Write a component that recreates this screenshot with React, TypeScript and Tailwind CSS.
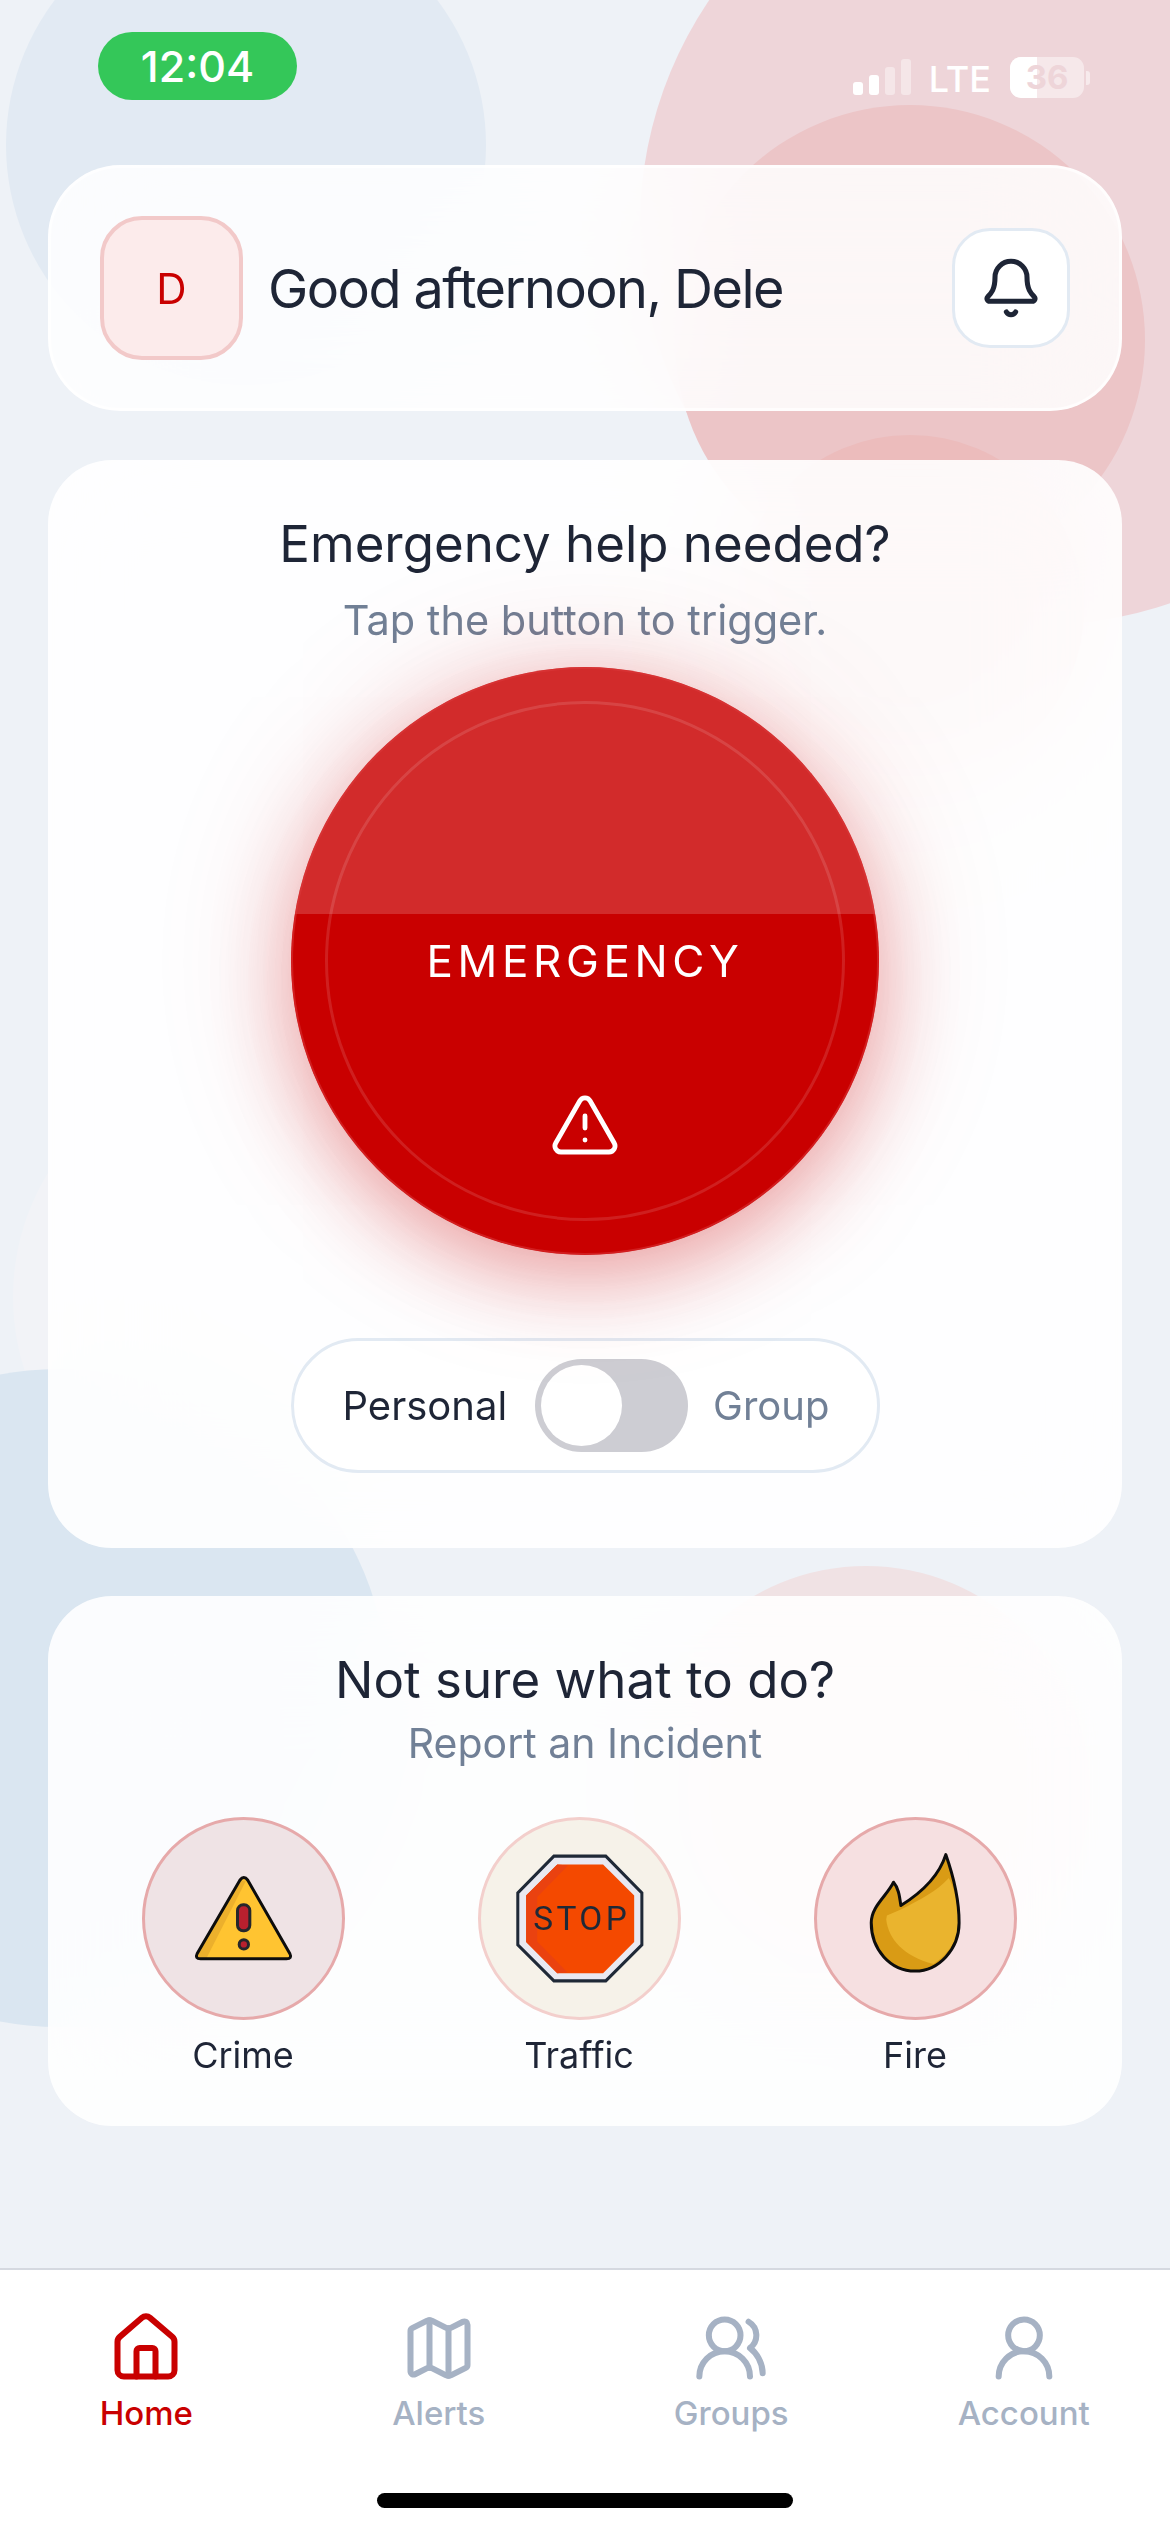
import { Bell, House, Map, TriangleAlert, UserRound, UsersRound } from "lucide-react";

const navItems = [
  { label: "Home", icon: House, active: true },
  { label: "Alerts", icon: Map, active: false },
  { label: "Groups", icon: UsersRound, active: false },
  { label: "Account", icon: UserRound, active: false },
];

function CrimeIcon() {
  return (
    <svg viewBox="35 22 608 610" className="w-[203px] h-[203px] flex-none">
      <path d="M328 212 Q340 196 352 212 L478 432 Q486 448 468 448 L210 448 Q192 448 200 432 Z" fill="#ffc431" />
      <path d="M328 212 L346 214 L228 446 L210 448 Q192 448 200 432 Z" fill="#ecb02c" />
      <path d="M328 212 Q340 196 352 212 L478 432 Q486 448 468 448 L210 448 Q192 448 200 432 Z" fill="none" stroke="#0d0d0d" strokeWidth="9" />
      <rect x="321" y="286" width="37" height="78" rx="17" fill="#b9202e" stroke="#26262b" strokeWidth="9" />
      <circle cx="340" cy="405" r="14" fill="#b9202e" stroke="#26262b" strokeWidth="9" />
    </svg>
  );
}

function StopIcon() {
  return (
    <svg viewBox="53 23 607 607" className="w-[203px] h-[203px] flex-none">
      <polygon points="280,140 435,140 543,250 543,405 435,513 280,513 172,405 172,250" fill="#e9e9f1" stroke="#1f2937" strokeWidth="9" />
      <polygon points="290,165 427,165 520,258 520,397 427,490 290,490 197,397 197,258" fill="#f44900" />
      <polygon points="290,165 322,168 230,262 230,395 320,487 290,490 197,397 197,258" fill="#ea4210" />
      <text x="358" y="362" textAnchor="middle" textLength="280" fontSize="100" fontFamily="Roboto, sans-serif" fill="#1f2937">
        STOP
      </text>
    </svg>
  );
}

function FireIcon() {
  return (
    <svg viewBox="72 22 608 610" className="w-[203px] h-[203px] flex-none">
      <path d="M467 135 C490 200 507 270 507 340 C507 420 445 485 375 485 C300 485 243 420 243 340 C243 290 290 260 310 218 C325 235 328 260 332 288 C385 255 445 205 467 135 Z" fill="#d99b15" />
      <path d="M288 330 C295 390 340 440 430 464 C480 430 503 390 505 340 C505 290 495 240 476 205 C440 245 390 270 332 300 L290 318 Z" fill="#eab42e" />
      <path d="M467 135 C490 200 507 270 507 340 C507 420 445 485 375 485 C300 485 243 420 243 340 C243 290 290 260 310 218 C325 235 328 260 332 288 C385 255 445 205 467 135 Z" fill="none" stroke="#0d0d0d" strokeWidth="9" strokeLinejoin="round" />
    </svg>
  );
}

export default function App() {
  return (
    <div
      className="relative w-[1170px] h-[2532px] overflow-hidden bg-[#eef2f7] flex flex-col text-[#1e293b]"
      style={{ fontFamily: "Inter, sans-serif" }}
    >
      {/* Background blobs */}
      <div className="absolute left-[6px] top-[-95px] w-[480px] h-[480px] rounded-full bg-[#e2eaf3]" />
      <div className="absolute left-[640px] top-[-175px] w-[800px] h-[800px] rounded-full bg-[#eed5d9]" />
      <div className="absolute left-[675px] top-[105px] w-[470px] h-[470px] rounded-full bg-[#ecc5c7]" />
      <div className="absolute left-[736px] top-[435px] w-[348px] h-[348px] rounded-full bg-[#ecbcbc]" />
      <div className="absolute left-[13px] top-[1060px] w-[474px] h-[474px] rounded-full bg-[#f2f3f7]" />
      <div className="absolute left-[-269px] top-[1369px] w-[658px] h-[658px] rounded-full bg-[#dae6f1]" />
      <div className="absolute left-[642px] top-[1566px] w-[448px] h-[448px] rounded-full bg-[#f0e2e4]" />

      {/* Status bar */}
      <div className="relative h-[165px] flex-none flex justify-between items-start">
        <div className="ml-[98px] mt-[32px] w-[199px] h-[68px] rounded-[34px] bg-[#34c759] flex items-center justify-center text-white text-[43px] font-medium">
          12:04
        </div>
        <div className="mr-[80px] mt-[57px] h-[41px] flex items-end">
          <div className="flex items-end gap-[6px] mb-[3px]">
            <div className="w-[10px] h-[13px] rounded-[3px] bg-white" />
            <div className="w-[10px] h-[20px] rounded-[3px] bg-white" />
            <div className="w-[10px] h-[28px] rounded-[3px] bg-white/40" />
            <div className="w-[10px] h-[36px] rounded-[3px] bg-white/40" />
          </div>
          <div className="ml-[18px] text-white text-[36px] leading-[41px] font-medium mb-[-2px]">LTE</div>
          <div className="ml-[19px] flex items-center gap-[2px]">
            <div className="relative w-[74px] h-[41px] rounded-[11px] bg-white/45 overflow-hidden flex items-center justify-center">
              <div className="absolute left-0 top-0 bottom-0 w-[27px] bg-white" />
              <span className="relative text-[#eed5d9] text-[33px] font-bold">36</span>
            </div>
            <div className="w-[4px] h-[14px] rounded-r-[3px] bg-white/50" />
          </div>
        </div>
      </div>

      {/* Greeting */}
      <div className="relative mx-[48px] h-[246px] flex-none rounded-[72px] bg-white/85 backdrop-blur-3xl border-[3px] border-white/70 flex items-center pl-[49px] pr-[49px]">
        <div className="w-[143px] h-[144px] rounded-[42px] bg-[#fcebeb] border-[4px] border-[#f2c9c9] flex items-center justify-center text-[#c90000] text-[42px]">
          D
        </div>
        <div className="ml-[25px] flex-1 text-[54px] tracking-[-1.55px] text-[#1e2536]">Good afternoon, Dele</div>
        <div className="w-[118px] h-[120px] rounded-[38px] bg-white border-[3px] border-[#e2eaf3] flex items-center justify-center">
          <Bell size={64} strokeWidth={1.9} className="text-[#1e2536]" />
        </div>
      </div>

      {/* Emergency */}
      <div className="relative mx-[48px] mt-[49px] h-[1088px] flex-none rounded-[64px] bg-white/90 backdrop-blur-3xl flex flex-col items-center pt-[48px]">
        <div className="text-[51px] leading-[72px] text-[#1e2536]">Emergency help needed?</div>
        <div className="mt-[13px] text-[41.5px] leading-[54px] text-[#718096]">Tap the button to trigger.</div>
        <div className="relative mt-[20px] w-[588px] h-[588px] flex-none rounded-full bg-[#c90000] overflow-hidden flex flex-col items-center pt-[264px] shadow-[0_22px_80px_rgba(201,0,0,0.32),0_0_150px_rgba(201,0,0,0.14)] text-white">
          <div className="absolute left-0 right-0 top-0 h-[247px] bg-white/[0.17]" />
          <div className="absolute inset-0 rounded-full border-[2px] border-[#dc3a3c]/50" />
          <div className="absolute left-[34px] top-[34px] w-[520px] h-[520px] rounded-full border-[3px] border-white/[0.12]" />
          <div className="relative text-[44px] leading-[60px] tracking-[0.105em]">EMERGENCY</div>
          <TriangleAlert size={72} strokeWidth={1.6} className="relative mt-[98px]" />
        </div>
        <div className="mt-[83px] w-[589px] h-[135px] rounded-[68px] bg-white border-[3px] border-[#e2eaf3] flex items-center pl-[49px]">
          <span className="text-[40px] text-[#1e2536]">Personal</span>
          <div className="ml-[28px] w-[153px] h-[93px] rounded-[47px] bg-[#cdcdd3] flex items-center pl-[6px]">
            <div className="w-[81px] h-[81px] rounded-full bg-white" />
          </div>
          <span className="ml-[25px] text-[40px] text-[#718096]">Group</span>
        </div>
      </div>

      {/* Report */}
      <div className="relative mx-[48px] mt-[48px] h-[530px] flex-none rounded-[64px] bg-white/[0.88] backdrop-blur-3xl flex flex-col items-center pt-[48px]">
        <div className="text-[51px] leading-[72px] text-[#1e2536]">Not sure what to do?</div>
        <div className="text-[41px] leading-[54px] text-[#718096]">Report an Incident</div>
        <div className="mt-[47px] ml-[-12px] grid grid-cols-3 w-[1008px]">
          <div className="flex flex-col items-center">
            <div className="w-[203px] h-[203px] rounded-full bg-[#efe3e5] border-[3px] border-[#e6a9aa] flex items-center justify-center">
              <CrimeIcon />
            </div>
            <div className="mt-[11px] text-[36px] leading-[48px] text-[#1e2536]">Crime</div>
          </div>
          <div className="flex flex-col items-center">
            <div className="w-[203px] h-[203px] rounded-full bg-[#f6f2e9] border-[3px] border-[#f3cfcc] flex items-center justify-center">
              <StopIcon />
            </div>
            <div className="mt-[11px] text-[36px] leading-[48px] text-[#1e2536]">Traffic</div>
          </div>
          <div className="flex flex-col items-center">
            <div className="w-[203px] h-[203px] rounded-full bg-[#f6e0e1] border-[3px] border-[#e6a9aa] flex items-center justify-center">
              <FireIcon />
            </div>
            <div className="mt-[11px] text-[36px] leading-[48px] text-[#1e2536]">Fire</div>
          </div>
        </div>
      </div>

      {/* Bottom nav */}
      <div className="absolute left-0 right-0 bottom-0 h-[264px] bg-white border-t-[2px] border-[#d5d9e0] flex flex-col">
        <div className="grid grid-cols-4 pt-[40px]">
          {navItems.map((item) => {
            const Icon = item.icon;
            return (
              <div key={item.label} className={`flex flex-col items-center ${item.active ? "text-[#c90000]" : "text-[#a6b2c4]"}`}>
                <Icon size={76} strokeWidth={1.9} />
                <div className="mt-[3px] text-[33px] leading-[48px] font-medium">{item.label}</div>
              </div>
            );
          })}
        </div>
        <div className="mt-[56px] mx-auto w-[416px] h-[15px] rounded-full bg-black" />
      </div>
    </div>
  );
}
